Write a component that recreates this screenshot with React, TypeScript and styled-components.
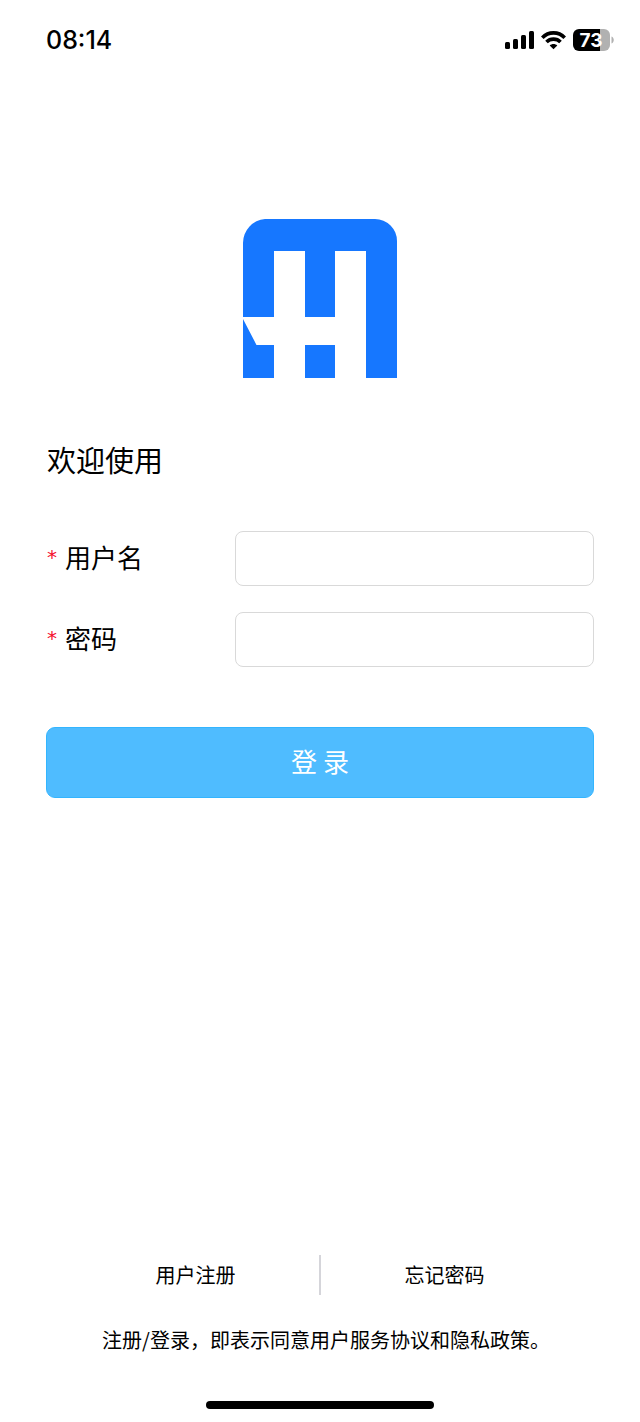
import React from "react";
import styled, { createGlobalStyle } from "styled-components";

const GlobalStyle = createGlobalStyle`
  *, *::before, *::after { box-sizing: border-box; }
  body {
    margin: 0;
    background: #fff;
    color: #000;
    font-family: "Noto Sans CJK SC", sans-serif;
  }
`;

const Page = styled.div`
  min-height: 100vh;
  display: flex;
  flex-direction: column;
`;

const StatusBar = styled.header`
  height: 80px;
  padding: 0 26px 0 46px;
  display: flex;
  align-items: center;
  justify-content: space-between;
`;

const Clock = styled.time`
  font: 500 25px/32px Inter, sans-serif;
`;

const StatusIcons = styled.div`
  display: flex;
  align-items: center;
  gap: 7px;
`;

const Main = styled.main`
  flex: 1;
  display: flex;
  flex-direction: column;
  padding: 139px 46px 0;
`;

const Logo = styled.svg`
  display: block;
  align-self: center;
  width: 154px;
  height: 159px;
`;

const Title = styled.h1`
  margin: 61px 0 51px;
  padding-left: 1px;
  font-size: 29px;
  line-height: 41px;
  font-weight: 400;
`;

const Form = styled.form`
  display: flex;
  flex-direction: column;
  gap: 26px;
`;

const Field = styled.div`
  display: flex;
  align-items: center;
`;

const Label = styled.label`
  width: 189px;
  padding: 0 0 3px 1px;
  display: flex;
  align-items: center;
  gap: 8px;
  font-size: 26px;
  line-height: 36px;
`;

const Required = styled.span`
  color: #f5102d;
  font: 400 20px/28px "DejaVu Sans", sans-serif;
`;

const Input = styled.input`
  flex: 1;
  min-width: 0;
  height: 55px;
  padding: 0 20px;
  border: 1px solid #d9d9d9;
  border-radius: 8px;
  background: #fff;
  font: 400 26px/36px "Noto Sans CJK SC", sans-serif;
`;

const LoginButton = styled.button`
  height: 71px;
  margin-top: 34px;
  padding: 0 0 4px;
  border: 1px solid #33b5ff;
  border-radius: 9px;
  background: #4fbcff;
  color: #fff;
  font: 400 26px/36px "Noto Sans CJK SC", sans-serif;
  cursor: pointer;
`;

const Footer = styled.footer`
  display: flex;
  flex-direction: column;
  align-items: center;
  padding-bottom: 13px;
  font-size: 20px;
  line-height: 30px;
`;

const Links = styled.nav`
  width: 100%;
  height: 40px;
  padding: 0 72px;
  display: flex;
  align-items: center;
`;

const FooterLink = styled.a`
  flex: 1;
  text-align: center;
  color: inherit;
  text-decoration: none;
`;

const Divider = styled.span`
  width: 2px;
  height: 40px;
  background: #d5d5da;
`;

const Terms = styled.p`
  margin: 30px 0 46px;
  padding-left: 12px;
`;

const HomeIndicator = styled.div`
  width: 228px;
  height: 8px;
  border-radius: 4px;
  background: #000;
`;

const SignalIcon = () => (
  <svg width="29" height="20" viewBox="0 0 29 20" aria-hidden="true">
    <rect x="0" y="12" width="5" height="7" rx="1.5" />
    <rect x="8" y="9" width="5" height="10" rx="1.5" />
    <rect x="16" y="5" width="5" height="14" rx="1.5" />
    <rect x="24" y="1" width="5" height="18" rx="1.5" />
  </svg>
);

const WifiIcon = () => (
  <svg width="25" height="20" viewBox="0 0 25 20" aria-hidden="true">
    <g fill="none" stroke="#000" strokeWidth="3.6">
      <path d="M1.3 7.7C7.5 1.3 17.5 1.3 23.7 7.7" />
      <path d="M5.5 12C9.3 8.1 15.7 8.1 19.5 12" />
    </g>
    <path d="M8.7 15.4c2.2-2 5.4-2 7.6 0L12.5 19.3Z" />
  </svg>
);

const BatteryIcon = () => (
  <svg width="41" height="22" viewBox="0 0 41 22" role="img" aria-label="73%">
    <path fill="#b1b1b1" d="M26 0h5a6 6 0 0 1 6 6v10a6 6 0 0 1-6 6h-5Z" />
    <path d="M6 0h21v22H6a6 6 0 0 1-6-6V6a6 6 0 0 1 6-6Z" />
    <path fill="#b1b1b1" d="M38.5 7.5c3 1.2 3 5.8 0 7Z" />
    <text x="18" y="18" textAnchor="middle" fill="#fff" fontFamily="Inter, sans-serif" fontSize="19" fontWeight="700">
      73
    </text>
  </svg>
);

export default function App() {
  return (
    <Page>
      <GlobalStyle />
      <StatusBar>
        <Clock>08:14</Clock>
        <StatusIcons>
          <SignalIcon />
          <WifiIcon />
          <BatteryIcon />
        </StatusIcons>
      </StatusBar>
      <Main>
        <Logo viewBox="0 0 154 159" aria-hidden="true">
          <path
            fill="#1677ff"
            d="M0 98V24A24 24 0 0 1 22 0H132A22 22 0 0 1 154 22V159H123V32H92V98H62V32H31V98Z"
          />
          <path fill="#1677ff" d="M0 100 13.5 126H31V159H0ZM62 126H92V159H62Z" />
        </Logo>
        <Title>欢迎使用</Title>
        <Form onSubmit={(e: React.FormEvent) => e.preventDefault()}>
          <Field>
            <Label htmlFor="username">
              <Required>*</Required>用户名
            </Label>
            <Input id="username" name="username" required />
          </Field>
          <Field>
            <Label htmlFor="password">
              <Required>*</Required>密码
            </Label>
            <Input id="password" name="password" type="password" required />
          </Field>
          <LoginButton type="submit">登 录</LoginButton>
        </Form>
      </Main>
      <Footer>
        <Links>
          <FooterLink href="#register">用户注册</FooterLink>
          <Divider />
          <FooterLink href="#forgot">忘记密码</FooterLink>
        </Links>
        <Terms>注册/登录，即表示同意用户服务协议和隐私政策。</Terms>
        <HomeIndicator />
      </Footer>
    </Page>
  );
}
